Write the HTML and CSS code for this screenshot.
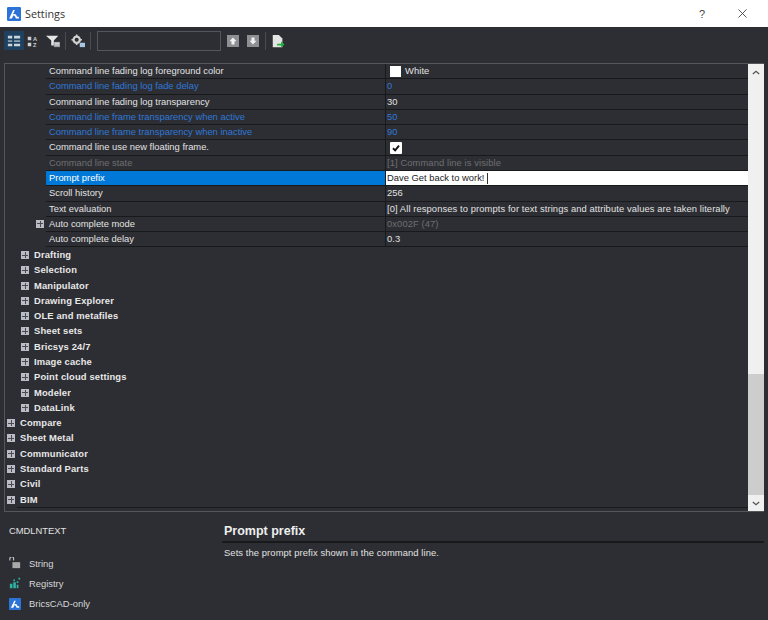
FILE: index.html
```html
<!DOCTYPE html>
<html lang="en">
<head>
<meta charset="utf-8">
<title>Settings</title>
<link rel="stylesheet" href="styles.css">
</head>
<body>
<div class="window">
  <header class="titlebar">
    <svg class="app-logo" viewBox="0 0 16 16"><rect width="16" height="16" rx="1.500" fill="#2b73d6"/><path d="M2.500 13 7 3.500h2L6.800 8.500c2-1 3.400-.4 4 1.200l.8 1.300h2V13h-3.400L9 10.600c-.5-1-1.400-1-2-.3L5.600 13z" fill="#fff"/></svg>
    <span class="title">Settings</span>
    <span class="spacer"></span>
    <span class="help">?</span>
    <svg class="close" viewBox="0 0 10 10"><path d="M.5.5l9 9M9.500.5l-9 9" stroke="#444" stroke-width="1" fill="none"/></svg>
  </header>

  <div class="toolbar">
    <button class="tool active"><svg viewBox="0 0 16 16"><path d="M1 2h5v3H1zM8 2h7v3H8z" fill="#c9d3dc"/><path d="M1 7h5v2H1zM8 7h7v2H8z" fill="#8fa5b8"/><path d="M1 11h5v3H1zM8 11h7v3H8z" fill="#c9d3dc"/></svg></button>
    <button class="tool narrow"><svg viewBox="0 0 16 16"><path d="M2 3h4v4H2zM2 10h4v4H2z" fill="#cfcfcf"/><text x="8" y="7.500" class="az">A</text><text x="8" y="14.500" class="az">Z</text></svg></button>
    <button class="tool filter"><svg viewBox="0 0 16 16"><path d="M0 2h14L9 7.500V13H6V7.500z" fill="#e6e6e6"/><path d="M9 9h7v6H9z" fill="#9a9da1"/><path d="M10 10h5v1h-5zM10 12h5v1h-5z" fill="#e6e6e6"/></svg></button>
    <span class="sep"></span>
    <button class="tool"><svg viewBox="0 0 16 16"><circle cx="6.500" cy="6.500" r="3.600" fill="none" stroke="#d0d0d0" stroke-width="2.600"/><path d="M5.600.5h1.800v2H5.600zM5.600 10.500h1.800v2H5.600zM.5 5.600h2v1.800h-2zM10.500 5.600h2v1.800h-2z" fill="#d0d0d0"/><path d="M10 10h6v5h-6z" fill="#a9c6e0"/></svg></button>
    <span class="sep"></span>
    <input class="search" type="text" aria-label="Search">
    <button class="step"><svg viewBox="0 0 12 12"><path d="M6 2.500 9.500 6.200H7.500V9.500h-3V6.200H2.500z" fill="#f2f2f2"/></svg></button>
    <button class="step"><svg viewBox="0 0 12 12"><path d="M6 9.500 2.500 5.800h2V2.500h3v3.300h2z" fill="#f2f2f2"/></svg></button>
    <span class="sep"></span>
    <button class="tool"><svg viewBox="0 0 16 16"><path d="M2 1h7l4 4v10H2z" fill="#e4e4e4"/><path d="M7 11h4.500V8.500L15.500 12l-4 3.500V13H7z" fill="#22b03c"/></svg></button>
  </div>

  <section class="tree-panel">
    <div class="tree">
      <div class="row prop"><div class="name">Command line fading log foreground color</div><div class="value"><i class="swatch"></i><span class="swatch-label">White</span></div></div>
      <div class="row prop mod"><div class="name">Command line fading log fade delay</div><div class="value">0</div></div>
      <div class="row prop"><div class="name">Command line fading log transparency</div><div class="value">30</div></div>
      <div class="row prop mod"><div class="name">Command line frame transparency when active</div><div class="value">50</div></div>
      <div class="row prop mod"><div class="name">Command line frame transparency when inactive</div><div class="value">90</div></div>
      <div class="row prop"><div class="name">Command line use new floating frame.</div><div class="value"><span class="check"><svg viewBox="0 0 10 10"><path d="M2.500 5.200 4.300 7 7.500 3" fill="none" stroke="#111" stroke-width="1.600"/></svg></span></div></div>
      <div class="row prop off"><div class="name">Command line state</div><div class="value">[1] Command line is visible</div></div>
      <div class="row prop selected"><div class="name">Prompt prefix</div><div class="value">Dave Get back to work!<span class="caret"></span></div></div>
      <div class="row prop"><div class="name">Scroll history</div><div class="value">256</div></div>
      <div class="row prop"><div class="name">Text evaluation</div><div class="value">[0] All responses to prompts for text strings and attribute values are taken literally</div></div>
      <div class="row prop has-plus off-value"><div class="name"><b class="plus"></b>Auto complete mode</div><div class="value">0x002F (47)</div></div>
      <div class="row prop"><div class="name">Auto complete delay</div><div class="value">0.3</div></div>
      <div class="row group l1"><b class="plus"></b>Drafting</div>
      <div class="row group l1"><b class="plus"></b>Selection</div>
      <div class="row group l1"><b class="plus"></b>Manipulator</div>
      <div class="row group l1"><b class="plus"></b>Drawing Explorer</div>
      <div class="row group l1"><b class="plus"></b>OLE and metafiles</div>
      <div class="row group l1"><b class="plus"></b>Sheet sets</div>
      <div class="row group l1"><b class="plus"></b>Bricsys 24/7</div>
      <div class="row group l1"><b class="plus"></b>Image cache</div>
      <div class="row group l1"><b class="plus"></b>Point cloud settings</div>
      <div class="row group l1"><b class="plus"></b>Modeler</div>
      <div class="row group l1"><b class="plus"></b>DataLink</div>
      <div class="row group l0"><b class="plus"></b>Compare</div>
      <div class="row group l0"><b class="plus"></b>Sheet Metal</div>
      <div class="row group l0"><b class="plus"></b>Communicator</div>
      <div class="row group l0"><b class="plus"></b>Standard Parts</div>
      <div class="row group l0"><b class="plus"></b>Civil</div>
      <div class="row group l0"><b class="plus"></b>BIM</div>
      <div class="tree-end"></div>
    </div>
    <div class="scrollbar">
      <div class="sb-btn"><svg viewBox="0 0 10 6"><path d="M1 5 5 1.500 9 5" fill="none" stroke="#555" stroke-width="1.600"/></svg></div>
      <div class="sb-thumb"></div>
      <div class="sb-track"></div>
      <div class="sb-btn"><svg viewBox="0 0 10 6"><path d="M1 1 5 4.500 9 1" fill="none" stroke="#555" stroke-width="1.600"/></svg></div>
    </div>
  </section>

  <footer class="details">
    <div class="meta">
      <div class="var">CMDLNTEXT</div>
      <div class="meta-item"><svg viewBox="0 0 14 14"><path d="M1 5V3a2.200 2.200 0 0 1 4.400 0v2" fill="none" stroke="#cfcfcf" stroke-width="1.200" transform="translate(0 -1)"/><path d="M4 6h9v7H4z" fill="#a9a9a9"/></svg><span>String</span></div>
      <div class="meta-item"><svg viewBox="0 0 14 14"><path d="M1 8h3v5H1zM5 6h3v7H5zM9 9h2v4H9zM5 3h2v2H5zM9 5h2v2H9zM11 1h2v2h-2z" fill="#2fb3a6"/></svg><span>Registry</span></div>
      <div class="meta-item"><svg viewBox="0 0 16 16"><rect width="16" height="16" rx="1" fill="#2b73d6"/><path d="M2.500 13 7 3.500h2L6.800 8.500c2-1 3.400-.4 4 1.200l.8 1.300h2V13h-3.400L9 10.600c-.5-1-1.400-1-2-.3L5.600 13z" fill="#fff"/></svg><span>BricsCAD-only</span></div>
    </div>
    <div class="desc">
      <h2>Prompt prefix</h2>
      <p>Sets the prompt prefix shown in the command line.</p>
    </div>
  </footer>
</div>
</body>
</html>
```

FILE: styles.css
```css
* { box-sizing: border-box; }
html, body { margin: 0; padding: 0; }
body { width: 768px; height: 620px; overflow: hidden; font-family: "Liberation Sans", Arial, sans-serif; font-size: 9.4px; background: #2d2e33; color: #e2e2e2; }
.window { display: flex; flex-direction: column; height: 620px; }

.titlebar { height: 27px; background: #fff; display: flex; align-items: center; padding: 0 21px 0 7px; flex: none; }
.app-logo { width: 14px; height: 14px; margin-right: 4px; }
.title { font-size: 10.8px; color: #333; font-family: "Open Sans", sans-serif; }
.spacer { flex: 1; }
.help { font-size: 11px; color: #444; margin-right: 33px; }
.close { width: 9px; height: 9px; }

.toolbar { height: 36px; flex: none; display: flex; align-items: center; padding: 0 0 9px 4px; }
.tool { width: 20px; height: 19px; background: none; border: 0; padding: 2px; display: flex; align-items: center; justify-content: center; flex: none; }
.tool svg { width: 14px; height: 14px; }
.tool.active { background: #1f4160; }
.tool.narrow { width: 18px; }
.tool.filter { margin-left: 1px; }
.az { font: bold 6.500px "Liberation Sans", sans-serif; fill: #cfcfcf; }
.sep { width: 1px; height: 18px; background: #4a4b50; margin: 0 2px; flex: none; }
.search { width: 124px; height: 20px; background: #2d2e33; border: 1px solid #55565b; margin: 0 6px 0 4px; flex: none; }
.step { width: 12px; height: 12px; padding: 0; margin-right: 8px; border: 0; background: #8d9092; display: flex; flex: none; }
.step + .sep { margin-left: -2px; margin-right: 2px; }
.step svg { width: 12px; height: 12px; }

.tree-panel { height: 449px; margin: 0 4px; flex: none; border: 1px solid #55565a; border-right-width: 0; display: flex; }
.tree { flex: 1; min-width: 0; display: flex; flex-direction: column; }
.row { height: 15.29px; flex: none; line-height: 14px; white-space: nowrap; }
.prop { display: flex; margin-left: 41px; border-bottom: 1px solid #18191b; }
.name { width: 339px; padding-left: 3px; position: relative; flex: none; }
.value { flex: 1; border-left: 1px solid #18191b; padding-left: 1px; display: flex; align-items: center; letter-spacing: .09px; }
.mod { color: #2e78d8; }
.off { color: #6d6e72; }
.off-value .value { color: #6d6e72; }
.selected .name { background: #0078d7; color: #fff; }
.selected .value { background: #fff; color: #222; letter-spacing: 0; }
.caret { width: 1px; height: 11px; background: #333; margin-left: 3px; }
.swatch { width: 11px; height: 11px; background: #fff; margin: 0 4px 0 3px; }
.check { width: 12px; height: 12px; margin-left: 3px; background: #fff; border-radius: 1px; display: flex; }
.check svg { width: 12px; height: 12px; }

.group { font-weight: 700; color: #e8e8e8; display: flex; align-items: center; letter-spacing: .15px; }
.l1 { padding-left: 16px; }
.l0 { padding-left: 2px; }
.plus { width: 8px; height: 8px; margin-right: 5px; flex: none; background:
  linear-gradient(#4a4b52,#4a4b52) center/6px 1px no-repeat,
  linear-gradient(#4a4b52,#4a4b52) center/1px 6px no-repeat,
  #b9bcc4; }
.has-plus .plus { position: absolute; left: -10px; top: 3px; }
.tree-end { height: 1px; margin: -2px 0 0 12px; background: #18191b; position: relative; top: 2px; }

.scrollbar { width: 16px; flex: none; display: flex; flex-direction: column; background: #cdcdcd; }
.sb-btn { height: 16px; background: #f0f0f0; display: flex; align-items: center; justify-content: center; flex: none; }
.sb-btn svg { width: 8px; height: 5px; }
.sb-thumb { height: 294px; background: #f0f0f0; flex: none; }
.sb-track { flex: 1; }

.details { flex: 1; display: flex; min-height: 0; }
.meta { width: 222px; flex: none; padding: 12px 0 0 9px; }
.var { height: 21px; line-height: 14px; margin-bottom: 8px; }
.meta-item { display: flex; align-items: center; height: 20.300px; gap: 8px; color: #d8d8d8; }
.meta-item svg { width: 12px; height: 12px; }
.desc { flex: 1; margin-right: 4px; padding-top: 10px; }
.desc h2 { margin: 0; font-size: 12.500px; line-height: 18px; height: 21px; padding-left: 2px; font-weight: 700; color: #eee; border-bottom: 2px solid #18191b; }
.desc p { margin: 3px 0 0; padding-left: 2px; line-height: 14px; letter-spacing: .09px; }
```
